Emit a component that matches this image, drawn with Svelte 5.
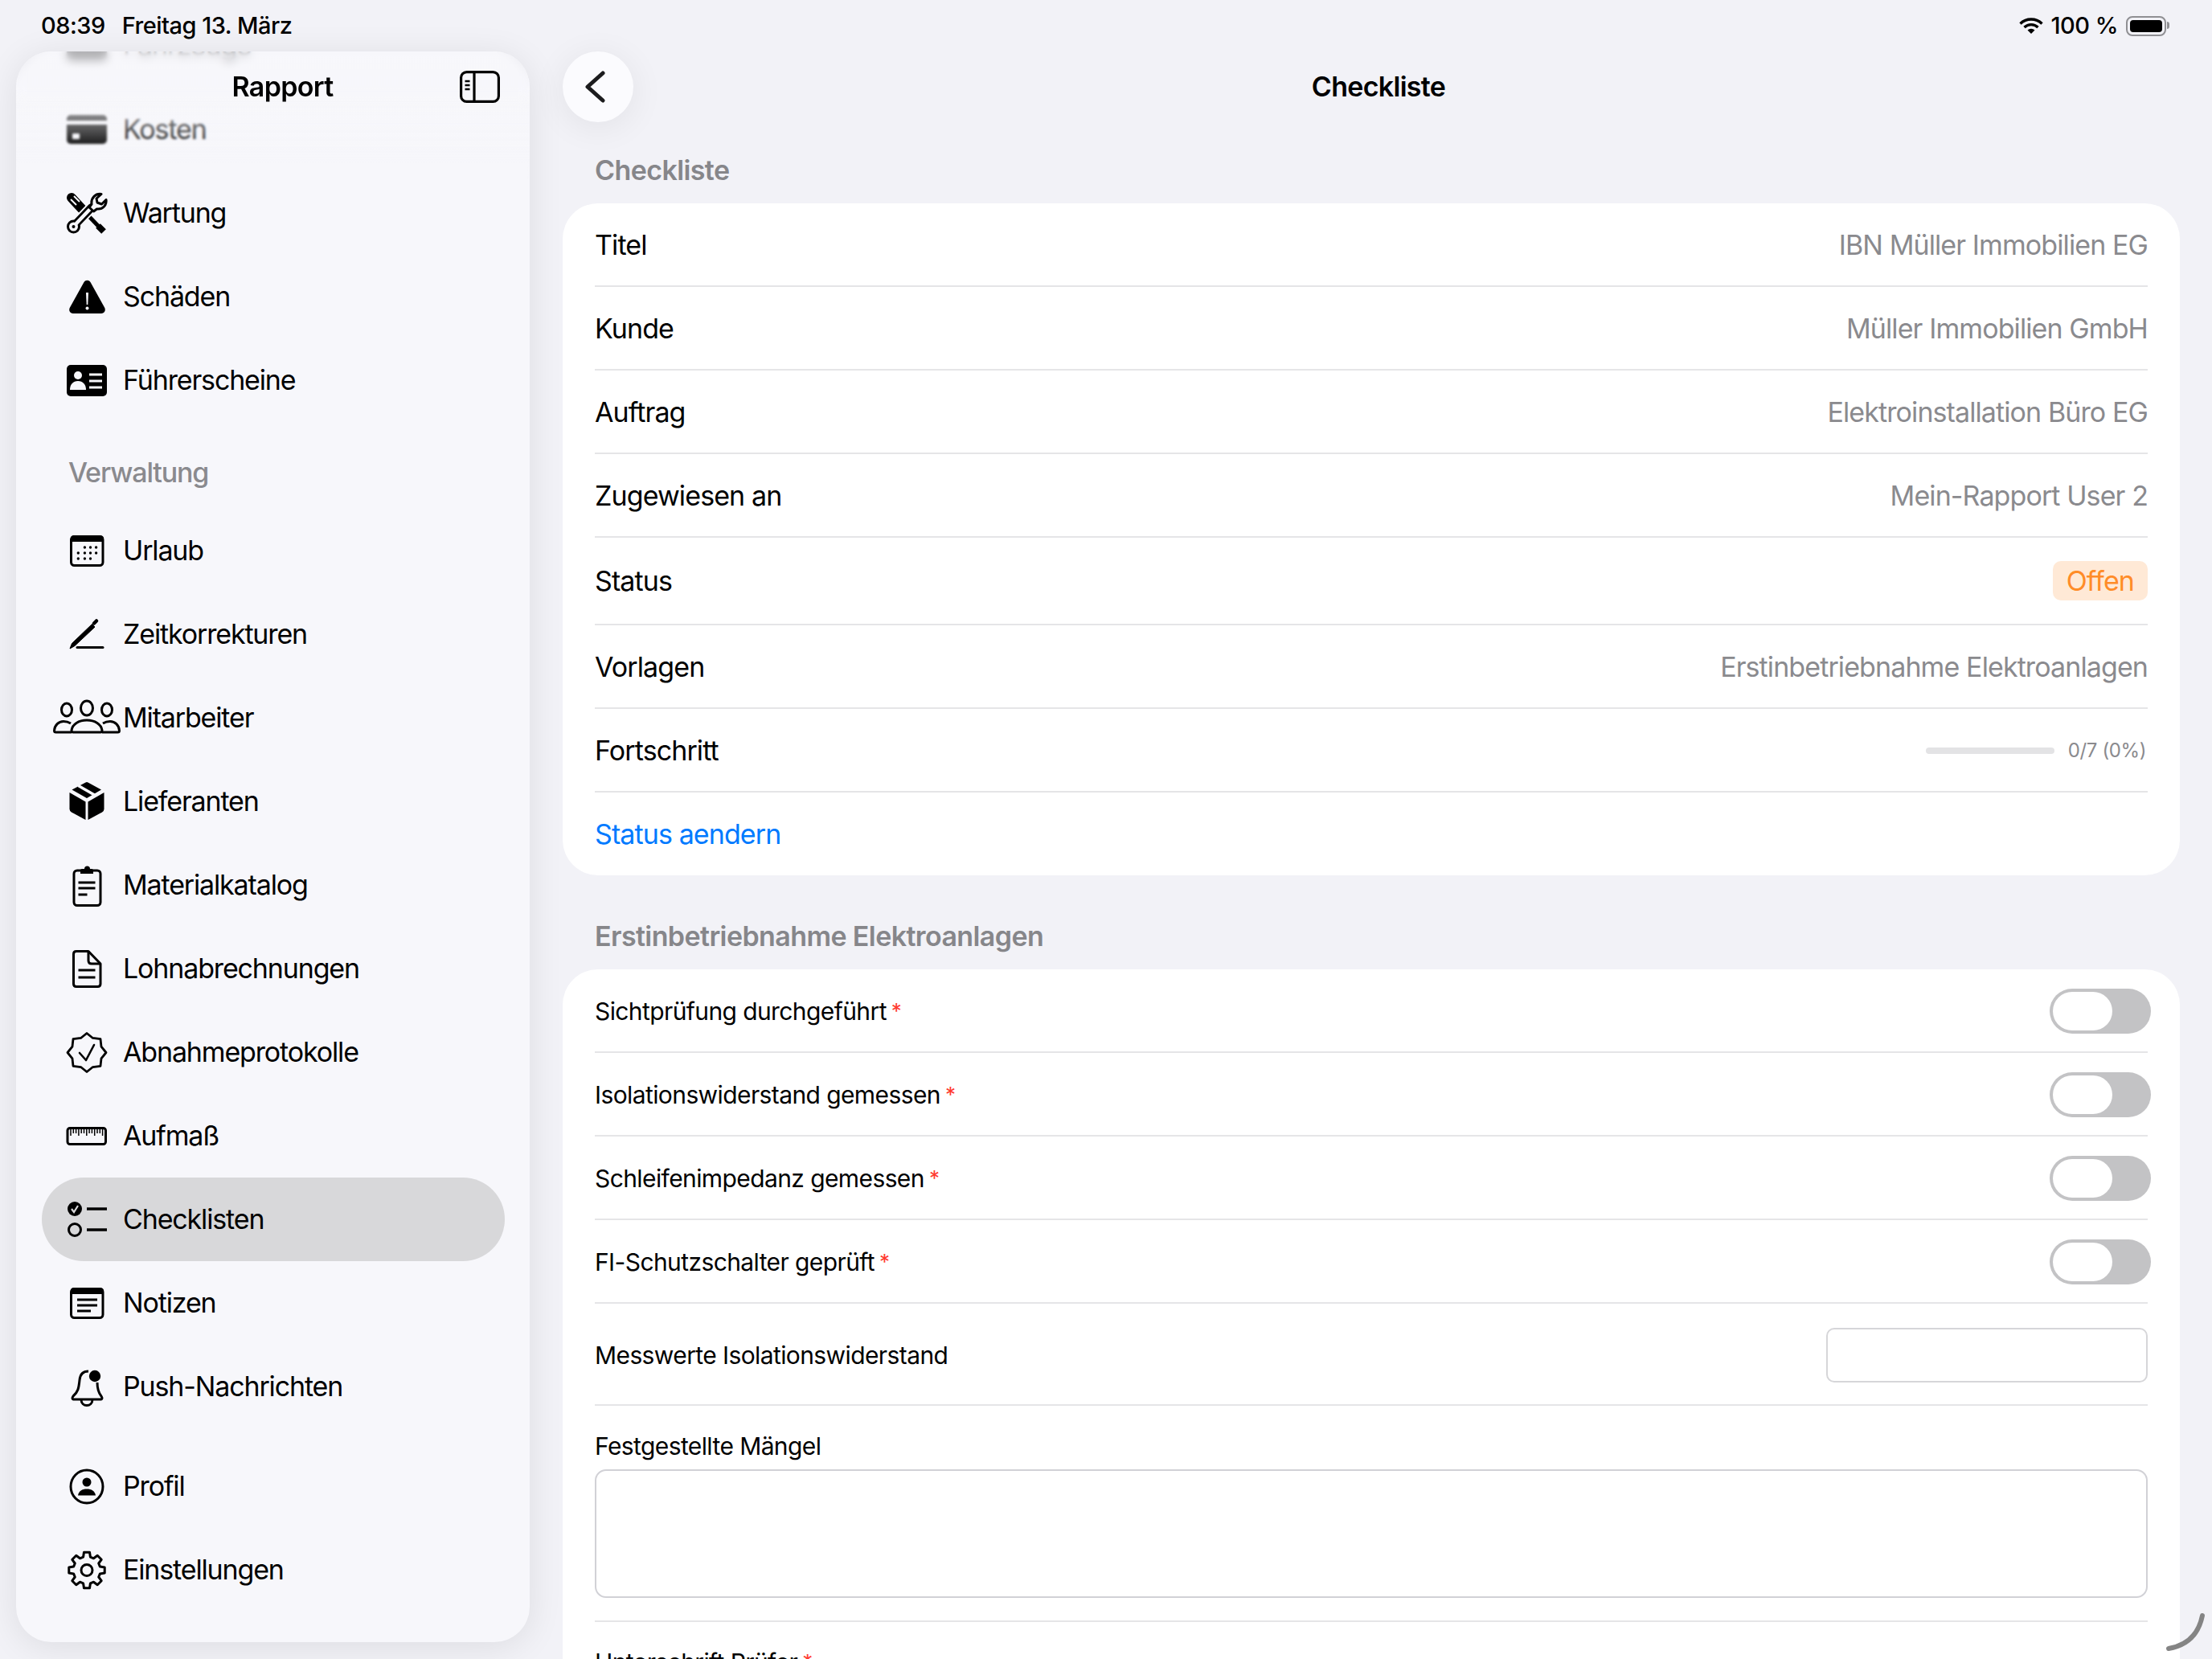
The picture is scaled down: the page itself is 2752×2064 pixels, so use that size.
<script>
    // sidebar entries, grouped the way the list scrolls
    const topRows = [
        { icon: "car", label: "Fahrzeuge" },
        { icon: "card", label: "Kosten" },
        { icon: "tools", label: "Wartung" },
        { icon: "warn", label: "Schäden" },
        { icon: "license", label: "Führerscheine" },
    ];
    const adminRows = [
        { icon: "calendar", label: "Urlaub" },
        { icon: "pencil", label: "Zeitkorrekturen" },
        { icon: "people", label: "Mitarbeiter" },
        { icon: "box", label: "Lieferanten" },
        { icon: "clipboard", label: "Materialkatalog" },
        { icon: "doc", label: "Lohnabrechnungen" },
        { icon: "seal", label: "Abnahmeprotokolle" },
        { icon: "ruler", label: "Aufmaß" },
        { icon: "checklist", label: "Checklisten", active: true },
        { icon: "note", label: "Notizen" },
        { icon: "bell", label: "Push-Nachrichten" },
    ];
    const bottomRows = [
        { icon: "person", label: "Profil" },
        { icon: "gear", label: "Einstellungen" },
    ];

    const infoRows = [
        { label: "Titel", value: "IBN Müller Immobilien EG" },
        { label: "Kunde", value: "Müller Immobilien GmbH" },
        { label: "Auftrag", value: "Elektroinstallation Büro EG" },
        { label: "Zugewiesen an", value: "Mein-Rapport User 2" },
    ];

    const checks = [
        "Sichtprüfung durchgeführt",
        "Isolationswiderstand gemessen",
        "Schleifenimpedanz gemessen",
        "FI-Schutzschalter geprüft",
    ];

    function polar(r, deg) {
        const a = ((deg - 90) * Math.PI) / 180;
        return `${(32 + r * Math.cos(a)).toFixed(2)} ${(32.5 + r * Math.sin(a)).toFixed(2)}`;
    }

    // 8 point badge outline
    const sealPath =
        "M" +
        Array.from({ length: 16 }, (_, i) => polar(i % 2 ? 19.5 : 24, i * 22.5)).join("L") +
        "Z";

    // 8 tooth gear outline
    const gearPath =
        "M" +
        Array.from({ length: 8 }, (_, i) => {
            const a = i * 45;
            return [polar(17, a - 15), polar(22.5, a - 9), polar(22.5, a + 9), polar(17, a + 15)].join("L");
        }).join("L") +
        "Z";

    const rulerTicks = Array.from({ length: 13 }, (_, i) => i);
</script>

{#snippet icon(name)}
    <svg class="icon" class:wide={name === "people"} viewBox={name === "people" ? "-9 0 82 64" : "0 0 64 64"} fill="none" stroke="#000" stroke-width="3">
        {#if name === "car"}
            <rect x="7" y="14" width="50" height="36" rx="5" fill="#000" stroke="none" />
        {:else if name === "card"}
            <rect x="7" y="14" width="50" height="36" rx="5" fill="#000" stroke="none" />
            <rect x="7" y="21" width="50" height="5" fill="#f7f7fb" stroke="none" />
            <rect x="14" y="37" width="9" height="7" rx="1" fill="#f7f7fb" stroke="none" />
        {:else if name === "tools"}
            <path d="M13 13 26 27" stroke-width="12" stroke-linecap="round" />
            <path d="M26 27 47 49" stroke-width="5" />
            <path d="M46 48 53 55" stroke-width="8" />
            <path d="M12 15 19 22M16 11 23 18" stroke="#f7f7fb" stroke-width="2" />
            <path d="M14 50 37 26" stroke="#f7f7fb" stroke-width="14" />
            <path d="M16 48 38 25" stroke="#000" stroke-width="10" stroke-linecap="round" />
            <circle cx="15.5" cy="49" r="7" fill="#f7f7fb" />
            <path d="M18 46 38 25" stroke="#f7f7fb" stroke-width="4.5" />
            <path d="M50 8.5C43 7.500 37 13 38 21L35 25 40.500 30 44.500 27C52 28 57 22 56 15.500L50.500 21 45 19 44 14Z" fill="#f7f7fb" stroke-linejoin="round" />
            <circle cx="15.500" cy="49" r="2" fill="#000" stroke="none" />
        {:else if name === "warn"}
            <path d="M28.500 14C30.500 11 34.500 11 36.500 14L54 45.500C56 49 54 53 50 53H15C11 53 9 49 11 45.500Z" fill="#000" stroke="none" />
            <path d="M31 27H34L33.300 42H31.700Z" fill="#f7f7fb" stroke="none" />
            <circle cx="32.500" cy="46.500" r="2" fill="#f7f7fb" stroke="none" />
        {:else if name === "license"}
            <rect x="7" y="13" width="50" height="39" rx="5" fill="#000" stroke="none" />
            <circle cx="21" cy="26" r="5" fill="#f7f7fb" stroke="none" />
            <path d="M11 44C11 37 15 33 21 33S31 37 31 44Z" fill="#f7f7fb" stroke="none" />
            <path d="M35 25H51M35 33H51M35 41H51" stroke="#f7f7fb" />
        {:else if name === "calendar"}
            <rect x="12.500" y="14.500" width="39.500" height="36" rx="4" />
            <path d="M12 21V17Q12 13 16 13H48Q53 13 53 17V21Z" fill="#000" stroke="none" />
            <g fill="#000" stroke="none">
                <circle cx="29.400" cy="28" r="1.700" /><circle cx="36.500" cy="28" r="1.700" /><circle cx="43.600" cy="28" r="1.700" />
                <circle cx="21.300" cy="35" r="1.700" /><circle cx="29.400" cy="35" r="1.700" /><circle cx="36.500" cy="35" r="1.700" /><circle cx="43.600" cy="35" r="1.700" />
                <circle cx="21.300" cy="42" r="1.700" /><circle cx="29.400" cy="42" r="1.700" /><circle cx="36.500" cy="42" r="1.700" />
            </g>
        {:else if name === "pencil"}
            <path d="M20 48.500H52" stroke-linecap="round" />
            <path d="M11 50 13.500 43.500 38.500 19.500 42 23 17 46.500Z" fill="#000" stroke-width="1" stroke-linejoin="round" />
            <path d="M41 18.500 44 15.500" stroke-width="4.500" stroke-linecap="round" />
        {:else if name === "people"}
            <ellipse cx="32" cy="20" rx="7.500" ry="9" />
            <ellipse cx="7" cy="22" rx="6.500" ry="8" />
            <ellipse cx="57" cy="22" rx="6.500" ry="8" />
            <path d="M15 50H49Q51 50 51 47.500C50 40 42 35 32 35S14 40 13 47.500Q13 50 15 50Z" />
            <path d="M13 50H-6.500Q-8.500 50 -8.500 48C-8 41 -3 36.500 3 36.500Q8 36.500 12 39" />
            <path d="M51 50H70.500Q72.500 50 72.500 48C72 41 67 36.500 61 36.500Q56 36.500 52 39" />
        {:else if name === "box"}
            <g fill="#000" stroke="none">
                <path d="M30.500 8.500Q32 7.500 33.500 8.500L50 17.500 32 28 13.500 17.500Z" />
                <path d="M10.500 21 30.500 32.500V55L13 45.500Q10.500 44 10.500 41.500Z" />
                <path d="M53.500 21 33.500 32.500V55L51 45.500Q53.500 44 53.500 41.500Z" />
            </g>
            <path d="M21.500 12.500 41.500 24" stroke="#f7f7fb" stroke-width="3.500" />
        {:else if name === "clipboard"}
            <rect x="16" y="14" width="33" height="43.500" rx="4" />
            <path d="M24 18V14Q24 12 26 12H29A3.500 3.500 0 0 1 36 12H38Q40 12 40 14V18Z" fill="#000" stroke="none" />
            <path d="M21.500 29H42.500M21.500 36H42.500M21.500 44H32.500" />
        {:else if name === "doc"}
            <path d="M19 10.500H34L49 26V51Q49 54.500 45.500 54.500H19Q15.500 54.500 15.500 51V14Q15.500 10.500 19 10.500Z" stroke-linejoin="round" />
            <path d="M34 10.500V22Q34 26 38 26H49" />
            <path d="M21.500 34H42.500M21.500 43H42.500" />
        {:else if name === "seal"}
            <path d={sealPath} stroke-width="2.800" stroke-linejoin="round" />
            <path d="M23 33 31 42 41 23" stroke-width="2.600" stroke-linecap="round" stroke-linejoin="round" />
        {:else if name === "ruler"}
            <rect x="8" y="22.500" width="47.500" height="20" rx="3" />
            {#each rulerTicks as t}
                <path d="M{12 + t * 3.300} 24V{t % 3 === 0 ? 32 : 29}" stroke-width="1.500" />
            {/each}
        {:else if name === "checklist"}
            <circle cx="17" cy="19" r="9" fill="#000" stroke="none" />
            <path d="M13 19 16 23 21 15" stroke="#d8d8da" stroke-width="2.200" />
            <circle cx="17" cy="45" r="7.500" />
            <path d="M32 19H57M32 45H57" stroke-width="3.500" />
        {:else if name === "note"}
            <rect x="12.500" y="14.500" width="39.500" height="36" rx="4" />
            <path d="M12 21V17Q12 13 16 13H48Q53 13 53 17V21Z" fill="#000" stroke="none" />
            <path d="M20 28H45M20 35H45M20 42H37" stroke-width="2.800" />
        {:else if name === "bell"}
            <path d="M34 13Q24 13 23 24C22 34 21 39 15 44Q13 47 15 48H50Q52 47 50 44C46 39 45 33 45 27" stroke-linejoin="round" />
            <path d="M25 48C25 58 39 58 39 48" />
            <circle cx="42" cy="19" r="7.200" fill="#000" stroke="none" />
        {:else if name === "person"}
            <ellipse cx="32" cy="32.500" rx="20" ry="20.500" />
            <circle cx="32" cy="27" r="5.500" fill="#000" stroke="none" />
            <path d="M21 43.500C22 38 26 35.500 32 35.500S42 38 43 43.500Z" fill="#000" stroke="none" />
        {:else if name === "gear"}
            <path d={gearPath} stroke-linejoin="round" />
            <circle cx="32" cy="32.500" r="7" />
        {/if}
    </svg>
{/snippet}

{#snippet navRow(row)}
    <div class="nav-row" class:active={row.active}>
        <span class="icon-box">{@render icon(row.icon)}</span>
        <span>{row.label}</span>
    </div>
{/snippet}

<div class="screen">
    <div class="status">
        <div class="status-left">
            <span>08:39</span>
            <span>Freitag 13. März</span>
        </div>
        <div class="status-right">
            <svg width="30" height="20" viewBox="0 0 30 20" fill="none" stroke="#000" stroke-width="3.400">
                <path d="M1.500 7.500A19.500 19.500 0 0 1 28.500 7.500" />
                <path d="M6.500 12A12.500 12.500 0 0 1 23.500 12" />
                <path d="M15 20 10.500 15.500A6.500 6.500 0 0 1 19.500 15.500Z" fill="#000" stroke="none" />
            </svg>
            <span>100 %</span>
            <div class="battery"><div class="battery-fill"></div></div>
        </div>
    </div>

    <div class="body">
        <aside class="sidebar">
            <div class="sidebar-list">
                {#each topRows as row}
                    {@render navRow(row)}
                {/each}
                <div class="nav-section">Verwaltung</div>
                {#each adminRows as row}
                    {@render navRow(row)}
                {/each}
                <div class="nav-gap"></div>
                {#each bottomRows as row}
                    {@render navRow(row)}
                {/each}
            </div>

            <!-- progressive blur under the bar: soft over Kosten, heavy at the very top -->
            <div class="sidebar-blur"></div>
            <div class="sidebar-blur-top"></div>
            <div class="sidebar-head">
                <span class="sidebar-title">Rapport</span>
                <svg class="panel-icon" width="50" height="40" viewBox="0 0 50 40" fill="none" stroke="#000" stroke-width="3.200">
                    <rect x="1.600" y="1.600" width="46.800" height="36.800" rx="7" />
                    <path d="M18 2V38" />
                    <path d="M6.500 13H12.500M6.500 18H12.500M6.500 23H12.500" stroke-width="2.400" />
                </svg>
            </div>
        </aside>

        <main class="content">
            <header class="topbar">
                <button type="button" class="back" aria-label="Zurück">
                    <svg width="28" height="40" viewBox="0 0 28 40" fill="none" stroke="#1c1c1e" stroke-width="5" stroke-linecap="round" stroke-linejoin="round">
                        <path d="M23 3 4 20 23 37" />
                    </svg>
                </button>
                <h1 class="topbar-title">Checkliste</h1>
            </header>

            <h2 class="section-title first">Checkliste</h2>
            <section class="card">
                {#each infoRows as row}
                    <div class="row">
                        <span>{row.label}</span>
                        <span class="value">{row.value}</span>
                    </div>
                {/each}
                <div class="row status-row">
                    <span>Status</span>
                    <span class="badge">Offen</span>
                </div>
                <div class="row">
                    <span>Vorlagen</span>
                    <span class="value">Erstinbetriebnahme Elektroanlagen</span>
                </div>
                <div class="row">
                    <span>Fortschritt</span>
                    <div class="progress">
                        <div class="progress-track"></div>
                        <span class="progress-text">0/7 (0%)</span>
                    </div>
                </div>
                <div class="row last link">Status aendern</div>
            </section>

            <h2 class="section-title">Erstinbetriebnahme Elektroanlagen</h2>
            <section class="card form">
                {#each checks as check}
                    <div class="row">
                        <span>{check}<span class="req">*</span></span>
                        <div class="toggle"><div class="thumb"></div></div>
                    </div>
                {/each}
                <div class="row input-row">
                    <label for="messwerte">Messwerte Isolationswiderstand</label>
                    <input id="messwerte" type="text" />
                </div>
                <div class="row stacked">
                    <label for="maengel">Festgestellte Mängel</label>
                    <textarea id="maengel"></textarea>
                </div>
                <div class="row stacked">
                    <span>Unterschrift Prüfer<span class="req">*</span></span>
                </div>
            </section>
        </main>
    </div>

    <svg class="scroll-arc" width="60" height="60" viewBox="0 0 60 60" fill="none" stroke="#848484" stroke-width="6" stroke-linecap="round">
        <path d="M6 47Q41 41 48 6" />
    </svg>
</div>

<style>
    :global(body) {
        margin: 0;
        background: #f2f2f7;
    }

    .screen {
        position: relative;
        width: 2752px;
        height: 2064px;
        overflow: hidden;
        background: #f2f2f7;
        color: #000;
        font-family: Inter, "Liberation Sans", sans-serif;
        font-size: 34px;
        line-height: 40px;
        letter-spacing: -0.9px;
    }

    .status {
        display: flex;
        justify-content: space-between;
        align-items: center;
        height: 64px;
        padding: 0 57px 0 51px;
        box-sizing: border-box;
        font-size: 29px;
        font-weight: 500;
        letter-spacing: -0.5px;
    }

    .status-left {
        display: flex;
        gap: 21px;
    }

    .status-right {
        display: flex;
        align-items: center;
        gap: 9px;
    }

    .battery {
        position: relative;
        width: 50px;
        height: 25px;
        margin-left: 1px;
        padding: 3px;
        box-sizing: border-box;
        border: 2px solid #8f8f93;
        border-radius: 8px;
    }

    .battery::after {
        content: "";
        position: absolute;
        top: 5px;
        right: -6px;
        width: 3px;
        height: 9px;
        border-radius: 0 3px 3px 0;
        background: #8f8f93;
    }

    .battery-fill {
        height: 100%;
        border-radius: 4px;
        background: #000;
    }

    .body {
        display: flex;
        gap: 41px;
        height: 2000px;
    }

    .sidebar {
        position: relative;
        flex: none;
        width: 639px;
        height: 1979px;
        margin-left: 20px;
        overflow: hidden;
        border-radius: 44px;
        background: #f7f7fb;
        box-shadow: 0 6px 44px rgba(0, 0, 0, 0.09);
        letter-spacing: -1.15px;
    }

    .sidebar-list {
        margin-top: -59px;
        padding: 0 31px 0 32px;
    }

    .nav-row {
        display: flex;
        align-items: center;
        gap: 13px;
        height: 104px;
        padding-left: 24px;
        border-radius: 52px;
    }

    .nav-row.active {
        background: #d8d8da;
    }

    .nav-section {
        height: 108px;
        box-sizing: border-box;
        padding: 43px 0 0 33px;
        color: #8a8a8e;
        font-weight: 500;
    }

    .nav-gap {
        height: 20px;
    }

    .icon-box {
        display: flex;
        justify-content: center;
        flex: none;
        width: 64px;
    }

    .icon {
        flex: none;
        width: 64px;
        height: 64px;
        overflow: visible;
    }

    .icon.wide {
        width: 82px;
    }

    .sidebar-blur {
        position: absolute;
        top: 0;
        left: 0;
        right: 0;
        height: 160px;
        background: linear-gradient(rgba(247, 247, 251, 0.72), rgba(247, 247, 251, 0.55) 50%, rgba(247, 247, 251, 0.12) 72%, rgba(247, 247, 251, 0));
        backdrop-filter: blur(1.5px);
        mask-image: linear-gradient(#000 75%, transparent);
    }

    .sidebar-blur-top {
        position: absolute;
        top: 0;
        left: 0;
        right: 0;
        height: 72px;
        backdrop-filter: blur(6px);
        mask-image: linear-gradient(#000 60%, transparent);
    }

    .sidebar-head {
        position: absolute;
        top: 24px;
        left: 0;
        right: 37px;
        display: flex;
        align-items: center;
        height: 40px;
        padding-left: 119px;
    }

    .sidebar-title {
        flex: 1;
        text-align: center;
        font-weight: 600;
        letter-spacing: -0.7px;
    }

    .panel-icon {
        flex: none;
        margin-left: 8px;
    }

    .content {
        flex: 1;
        min-width: 0;
        padding-right: 40px;
    }

    .topbar {
        display: flex;
        align-items: center;
        height: 88px;
    }

    .back {
        display: flex;
        align-items: center;
        justify-content: center;
        flex: none;
        width: 88px;
        height: 88px;
        padding: 0 6px 0 0;
        border: none;
        border-radius: 50%;
        background: #fbfbfe;
        box-shadow: 0 6px 44px rgba(0, 0, 0, 0.07);
    }

    .topbar-title {
        flex: 1;
        margin: 0 70px 0 0;
        text-align: center;
        font-size: 34px;
        font-weight: 600;
        letter-spacing: -0.7px;
    }

    .section-title {
        margin: 0;
        padding: 56px 0 21px 40px;
        color: #86868a;
        font-size: 34px;
        line-height: 40px;
        font-weight: 600;
        letter-spacing: -0.6px;
    }

    .section-title.first {
        padding-top: 40px;
    }

    .card {
        padding: 0 40px;
        border-radius: 44px;
        background: #fff;
    }

    .row {
        display: flex;
        align-items: center;
        justify-content: space-between;
        height: 104px;
        padding-top: 2px;
        box-sizing: border-box;
        border-bottom: 2px solid #e5e5e7;
    }

    .row.status-row {
        height: 109px;
        padding-top: 0;
    }

    .row.last {
        height: 103px;
        padding-top: 0;
        border-bottom: none;
    }

    .value {
        color: #8a8a8e;
    }

    .link {
        color: #007aff;
    }

    .badge {
        padding: 5px 17px 4px;
        border-radius: 10px;
        background: #ffe9d6;
        color: #ff8c28;
    }

    .progress {
        display: flex;
        align-items: center;
        gap: 17px;
        padding-right: 2px;
    }

    .progress-track {
        width: 160px;
        height: 8px;
        border-radius: 4px;
        background: #e3e3e5;
    }

    .progress-text {
        color: #8a8a8e;
        font-size: 24px;
        letter-spacing: -0.4px;
    }

    .form {
        font-size: 30px;
        letter-spacing: -0.6px;
    }

    .req {
        margin-left: 6px;
        color: #ff3b30;
        font-size: 26px;
        vertical-align: 2px;
    }

    .toggle {
        flex: none;
        box-sizing: border-box;
        width: 126px;
        height: 56px;
        margin-right: -4px;
        padding: 4px;
        border-radius: 28px;
        background: #c3c3c5;
    }

    .thumb {
        width: 74px;
        height: 48px;
        border-radius: 24px;
        background: #fff;
    }

    .row.input-row {
        height: 127px;
    }

    input {
        box-sizing: border-box;
        width: 400px;
        height: 68px;
        border: 2px solid #d6d6d9;
        border-radius: 10px;
        background: #fff;
        outline: none;
    }

    .row.stacked {
        flex-direction: column;
        align-items: stretch;
        justify-content: flex-start;
        height: 269px;
        padding-top: 30px;
    }

    textarea {
        display: block;
        box-sizing: border-box;
        width: 100%;
        height: 160px;
        margin-top: 9px;
        border: 2px solid #d1d1d6;
        border-radius: 14px;
        background: #fff;
        outline: none;
        resize: none;
    }

    .scroll-arc {
        position: absolute;
        right: 0;
        bottom: 0;
    }
</style>
